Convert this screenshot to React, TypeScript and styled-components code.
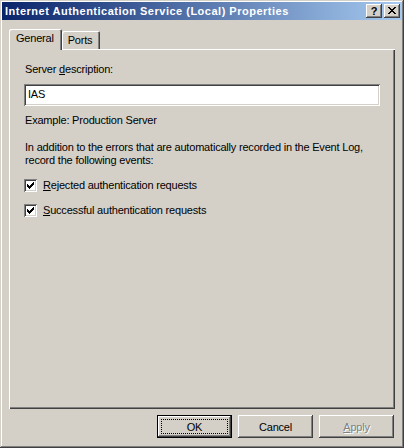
import styled, { createGlobalStyle, css } from 'styled-components'

const GlobalStyle = createGlobalStyle`
  html, body {
    margin: 0;
    padding: 0;
    background: #d4d0c8;
  }
  * {
    box-sizing: border-box;
  }
`

const face = '#d4d0c8'
const shadow = '#808080'
const darkShadow = '#404040'

const uiFont = css`
  font-family: "Liberation Sans", Arial, sans-serif;
  font-size: 11px;
  letter-spacing: -0.2px;
  color: #000;
`

const raised = css`
  box-shadow:
    inset -1px -1px ${darkShadow},
    inset 1px 1px #fff,
    inset -2px -2px ${shadow},
    inset 2px 2px ${face};
`

const sunken = css`
  box-shadow:
    inset 1px 1px ${shadow},
    inset -1px -1px #fff,
    inset 2px 2px ${darkShadow},
    inset -2px -2px ${face};
`

const Window = styled.div`
  ${uiFont};
  width: 404px;
  height: 448px;
  padding: 2px;
  display: flex;
  flex-flow: column;
  background: ${face};
  box-shadow:
    inset -1px -1px ${darkShadow},
    inset 1px 1px ${face},
    inset -2px -2px ${shadow},
    inset 2px 2px #fff;
`

const TitleBar = styled.div`
  height: 18px;
  display: flex;
  align-items: center;
  padding: 0 2px 0 3px;
  background: linear-gradient(to right, #0a246a, #a6caf0);
`

const TitleText = styled.div`
  flex: 1;
  font-family: "Liberation Sans", Arial, sans-serif;
  font-weight: bold;
  font-size: 11px;
  color: #fff;
  letter-spacing: 0.5px;
  white-space: nowrap;
`

const CaptionButtons = styled.div`
  display: flex;
  gap: 2px;
`

const CaptionButton = styled.div`
  width: 16px;
  height: 14px;
  display: flex;
  align-items: center;
  justify-content: center;
  background: ${face};
  font-family: "Liberation Sans", Arial, sans-serif;
  font-weight: bold;
  font-size: 11px;
  line-height: 14px;
  padding-bottom: 1px;
  ${raised};
`

const Body = styled.div`
  flex: 1;
  display: flex;
  flex-flow: column;
  padding: 9px 7px 8px 7px;
`

const TabStrip = styled.div`
  height: 20px;
  display: flex;
  align-items: flex-end;
`

const Tab = styled.div<{ $active?: boolean }>`
  position: relative;
  display: flex;
  justify-content: center;
  background: ${face};
  border-radius: 2px 2px 0 0;
  box-shadow:
    inset 1px 1px #fff,
    inset -1px 0 ${darkShadow},
    inset -2px 0 ${shadow};
  ${({ $active }) =>
    $active
      ? css`
          z-index: 1;
          height: 21px;
          margin-bottom: -1px;
          padding: 3px 8px 0 7px;
        `
      : css`
          height: 18px;
          padding: 3px 8px 0 6px;
        `}
`

const Panel = styled.div`
  flex: 1;
  display: flex;
  flex-flow: column;
  align-items: flex-start;
  padding: 14px 14px 0 16px;
  box-shadow:
    inset 1px 1px #fff,
    inset -1px -1px ${darkShadow},
    inset -2px -2px ${shadow};
`

const Label = styled.div<{ $gap?: number }>`
  line-height: 13px;
  margin-top: ${({ $gap }) => $gap ?? 0}px;
`

const TextField = styled.div`
  margin-top: 8px;
  margin-left: -1px;
  width: 356px;
  height: 22px;
  padding: 4px 0 0 4px;
  background: #fff;
  line-height: 13px;
  ${sunken};
`

const CheckRow = styled.div<{ $gap: number }>`
  display: flex;
  align-items: center;
  gap: 6px;
  margin-top: ${({ $gap }) => $gap}px;
  margin-left: -1px;
  line-height: 13px;
`

const CheckBox = styled.div`
  width: 13px;
  height: 13px;
  display: flex;
  align-items: center;
  justify-content: center;
  background: #fff;
  ${sunken};
`

const ButtonRow = styled.div`
  display: flex;
  justify-content: flex-end;
  gap: 6px;
  margin-top: 6px;
  padding-right: 1px;
`

const PushButton = styled.div<{ $default?: boolean; $disabled?: boolean }>`
  width: 75px;
  height: 23px;
  display: flex;
  align-items: center;
  justify-content: center;
  background: ${face};
  position: relative;
  ${({ $default }) =>
    $default
      ? css`
          box-shadow:
            inset -1px -1px #000,
            inset 1px 1px #000,
            inset -2px -2px ${darkShadow},
            inset 2px 2px #fff,
            inset -3px -3px ${shadow};
        `
      : raised};
  ${({ $disabled }) =>
    $disabled &&
    css`
      color: ${shadow};
      text-shadow: 1px 1px #fff;
    `}
`

const FocusRing = styled.div`
  position: absolute;
  inset: 4px;
  border: 1px dotted #000;
`

const Check = () => (
  <svg width="7" height="7" viewBox="0 0 7 7">
    <path
      d="M0 2h1v1h1v1h1v-1h1v-1h1v-1h1v-1h1v3h-1v1h-1v1h-1v1h-1v1h-1v-1h-1v-1h-1z"
      fill="#000"
    />
  </svg>
)

const CloseGlyph = () => (
  <svg width="8" height="7" viewBox="0 0 8 7">
    <path
      d="M0 0h2v1h1v1h2v-1h1v-1h2v1h-1v1h-1v1h-1v1h1v1h1v1h1v1h-2v-1h-1v-1h-2v1h-1v1h-2v-1h1v-1h1v-1h1v-1h-1v-1h-1v-1h-1z"
      fill="#000"
    />
  </svg>
)

const App = () => {
  return (
    <>
      <GlobalStyle />
      <Window>
        <TitleBar>
          <TitleText>Internet Authentication Service (Local) Properties</TitleText>
          <CaptionButtons>
            <CaptionButton>?</CaptionButton>
            <CaptionButton>
              <CloseGlyph />
            </CaptionButton>
          </CaptionButtons>
        </TitleBar>

        <Body>
          <TabStrip>
            <Tab $active>General</Tab>
            <Tab>Ports</Tab>
          </TabStrip>

          <Panel>
            <Label>
              Server <u>d</u>escription:
            </Label>
            <TextField>IAS</TextField>
            <Label $gap={8}>Example: Production Server</Label>
            <Label $gap={14}>
              In addition to the errors that are automatically recorded in the Event Log,
              <br />
              record the following events:
            </Label>
            <CheckRow $gap={12}>
              <CheckBox>
                <Check />
              </CheckBox>
              <span>
                <u>R</u>ejected authentication requests
              </span>
            </CheckRow>
            <CheckRow $gap={12}>
              <CheckBox>
                <Check />
              </CheckBox>
              <span>
                <u>S</u>uccessful authentication requests
              </span>
            </CheckRow>
          </Panel>

          <ButtonRow>
            <PushButton $default>
              OK
              <FocusRing />
            </PushButton>
            <PushButton>Cancel</PushButton>
            <PushButton $disabled>
              <span>
                <u>A</u>pply
              </span>
            </PushButton>
          </ButtonRow>
        </Body>
      </Window>
    </>
  )
}

export default App
